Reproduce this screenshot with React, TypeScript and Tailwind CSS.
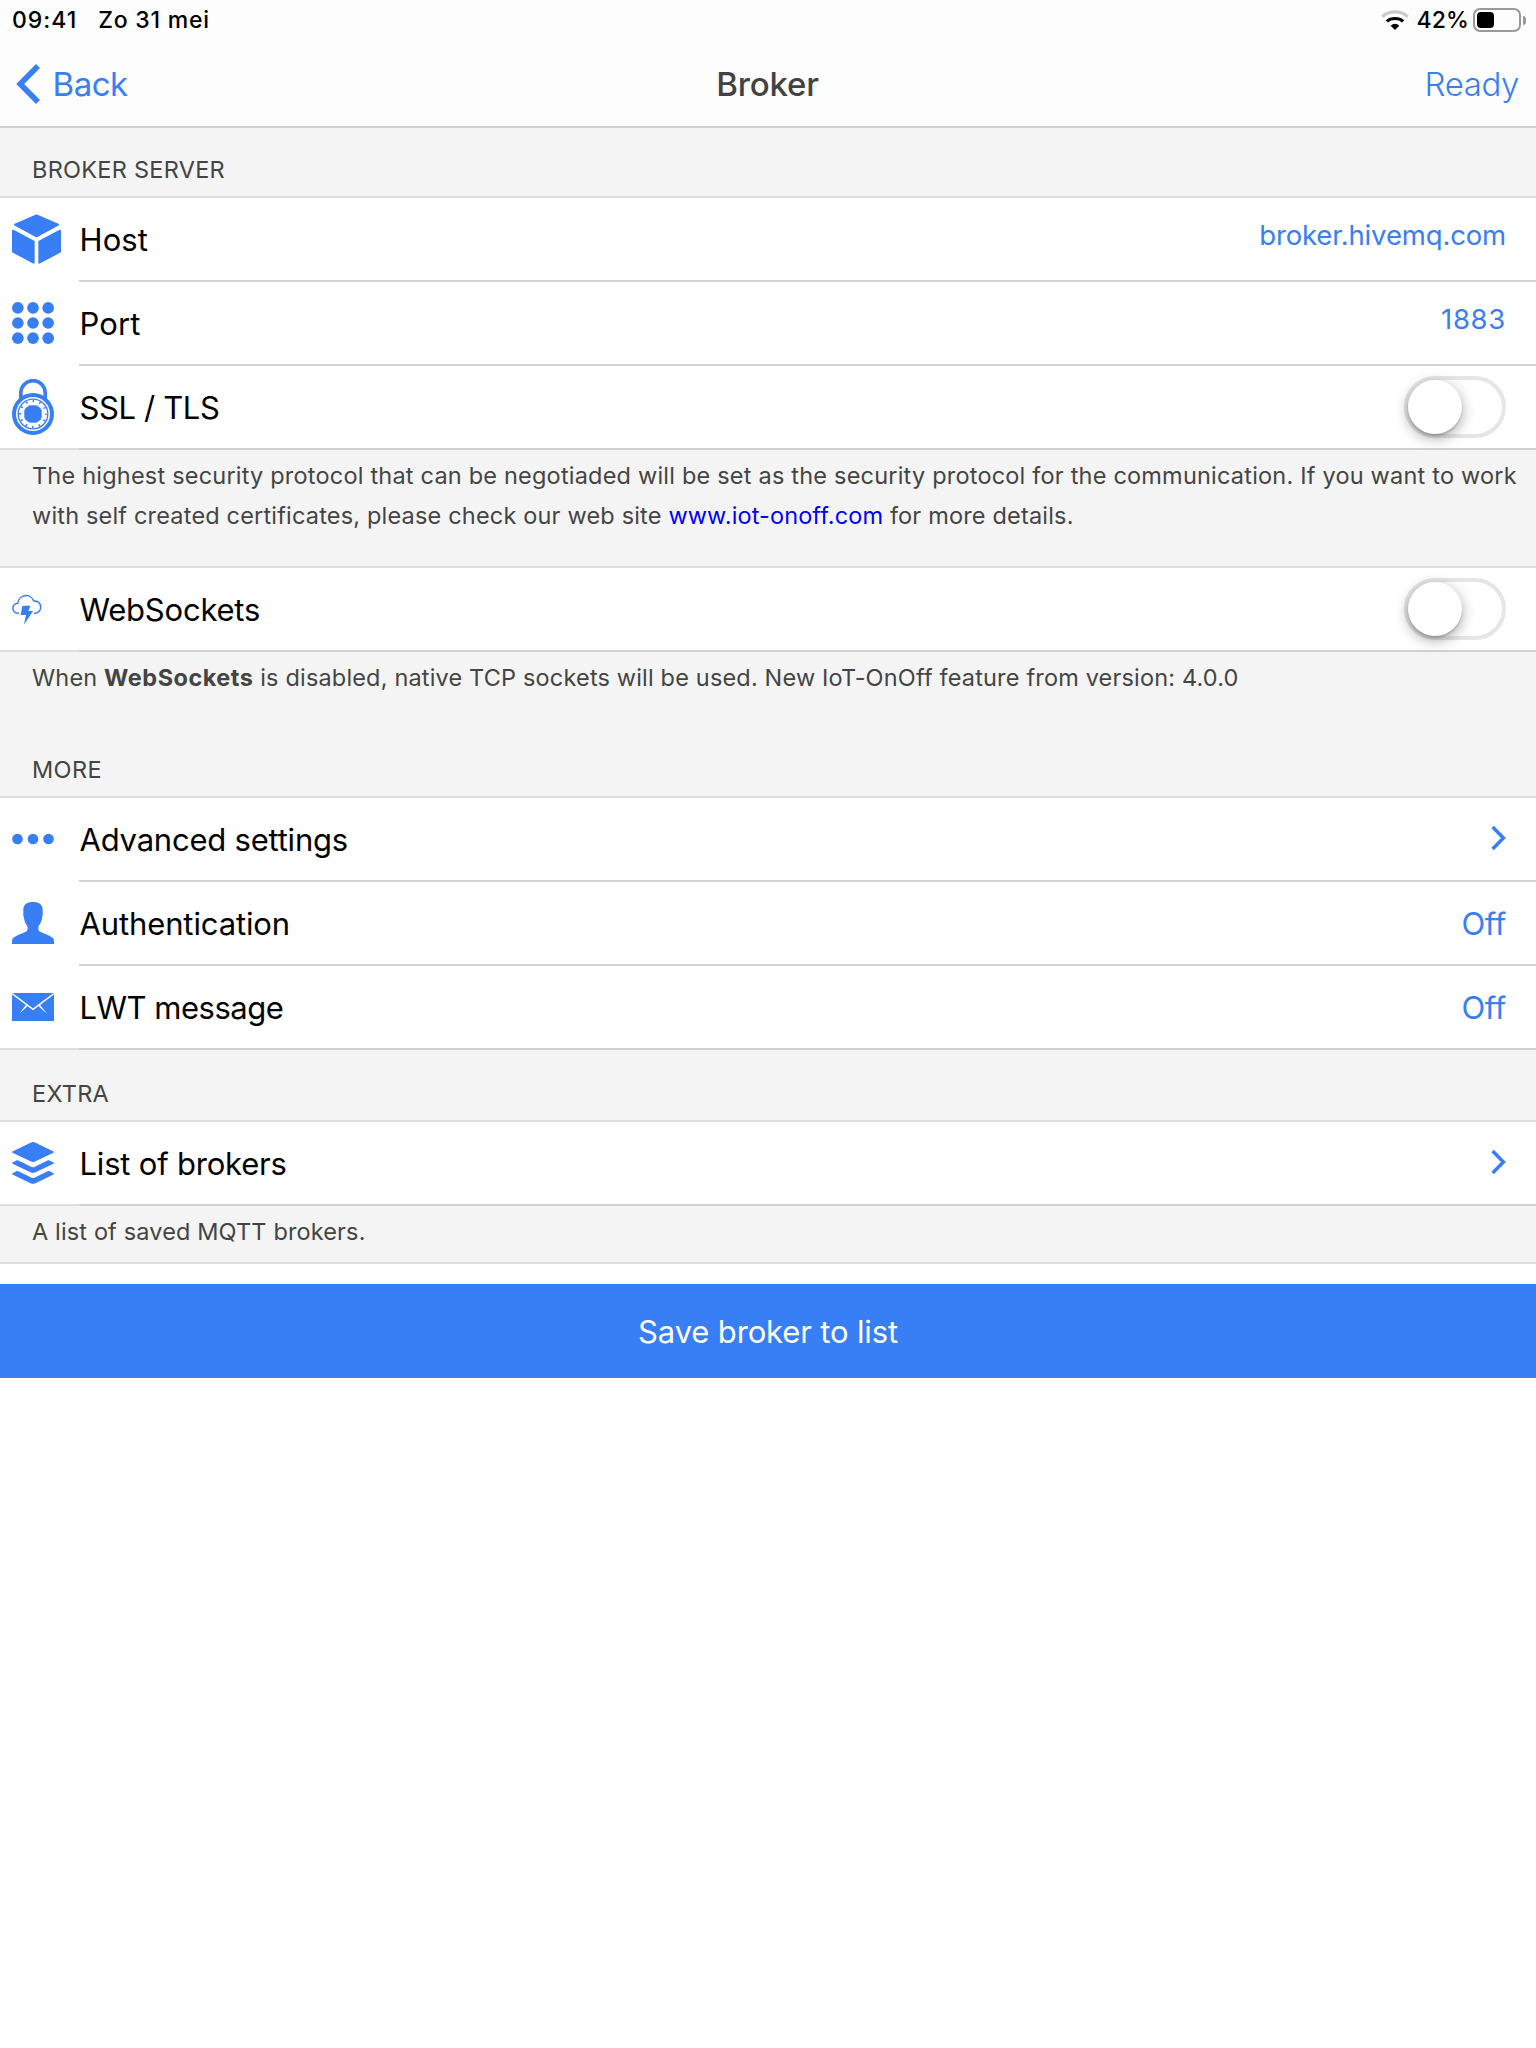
import type { ReactNode } from "react";

function CubeIcon() {
  return (
    <svg width="49" height="50" viewBox="0 0 147 150" fill="#387ef5" stroke="#387ef5" strokeWidth="6" strokeLinejoin="round">
      <path d="M73.500 4 L138 32 L73.500 67 L9 32 Z" />
      <path d="M3 50 L65 83 V146 L3 113 Z" />
      <path d="M144 50 L82 83 V146 L144 113 Z" />
    </svg>
  );
}

function KeypadIcon() {
  const at = [17.5, 63, 108.5];
  return (
    <svg width="42" height="42" viewBox="0 0 126 126" fill="#387ef5">
      {at.map((y) => at.map((x) => <circle key={`${x}-${y}`} cx={x} cy={y} r="17.5" />))}
    </svg>
  );
}

function PadlockIcon() {
  return (
    <svg width="42" height="56" viewBox="0 0 126 168" fill="none" stroke="#387ef5">
      <path d="M26.500 62 V41 A36.500 36 0 0 1 99.500 41 V62" strokeWidth="11" />
      <circle cx="63" cy="105" r="57" strokeWidth="12" fill="#fff" />
      <circle cx="63" cy="105" r="44.500" strokeWidth="4" />
      <circle cx="63" cy="105" r="39" strokeWidth="7" strokeDasharray="4.500 15.920" strokeDashoffset="2.250" />
      <path d="M52 80 H74 L85 88 L88 95 V115 L85 122 L74 130 H52 L41 122 L38 115 V95 L41 88 Z" fill="#387ef5" strokeWidth="2" strokeLinejoin="round" />
    </svg>
  );
}

function StormCloudIcon() {
  return (
    <svg width="30" height="32" viewBox="0 0 90 96" fill="none">
      <path
        d="M21 61 H17.500 A15.250 15.250 0 0 1 17.500 30.500 A24.500 24.500 0 0 1 65 24 A18.500 18.500 0 0 1 70 61 H66"
        stroke="#387ef5"
        strokeWidth="4.500"
      />
      <path d="M31 38 H55 L49 54 H63 L36 95 L42 66 H26 Z" fill="#387ef5" />
    </svg>
  );
}

function MoreIcon() {
  return (
    <svg width="42" height="12" viewBox="0 0 126 36" fill="#387ef5">
      <circle cx="16.500" cy="18" r="16" />
      <circle cx="63" cy="18" r="16" />
      <circle cx="109.500" cy="18" r="16" />
    </svg>
  );
}

function PersonIcon() {
  return (
    <svg width="42" height="42" viewBox="0 0 126 126" fill="#387ef5">
      <path d="M63 0 C80 0 92 7 92 23 L92 32 C93 36 92 40 91 44 C89 58 84 66 80 72 C79 78 78 84 82 88 C90 94 106 97 117 104 C125 108 126 112 126 118 V126 H0 V118 C0 112 1 108 9 104 C20 97 36 94 44 88 C48 84 47 78 46 72 C42 66 37 58 35 44 C34 40 33 36 34 32 L34 23 C34 7 46 0 63 0 Z" />
    </svg>
  );
}

function MailIcon() {
  return (
    <svg width="42" height="28" viewBox="0 0 126 84">
      <path d="M0 0 H126 V84 H0 Z" fill="#387ef5" />
      <path d="M0 2 L63 49 L126 2" fill="none" stroke="#fff" strokeWidth="4.500" />
      <path d="M42 35 L47 39 L22 62 Z M84 35 L79 39 L105 62 Z" fill="#fff" />
    </svg>
  );
}

function LayersIcon() {
  return (
    <svg width="42" height="42" viewBox="0 0 126 127" fill="#387ef5" stroke="#387ef5" strokeWidth="4" strokeLinejoin="round">
      <path d="M58 3 Q63 1 68 3 L124 30.500 L68 57.500 Q63 60 58 57.500 L2 30.500 Z" />
      <path d="M2 64 L14 57.500 Q16 57 18 58 L58 77.500 Q63 79.500 68 77.500 L108 58 Q110 57 112 57.500 L124 64 L68 90.500 Q63 92.500 58 90.500 Z" />
      <path d="M2 96.500 L14 90 Q16 89.500 18 90.500 L58 110 Q63 112 68 110 L108 90.500 Q110 89.500 112 90 L124 96.500 L68 123.500 Q63 125.500 58 123.500 Z" />
    </svg>
  );
}

function WifiIcon() {
  return (
    <svg width="28" height="20" viewBox="0 0 84 60" fill="none">
      <path d="M4 20.500 Q18 5.500 42 5.500 Q66 5.500 80 20.500" stroke="#cacaca" strokeWidth="9.500" />
      <path d="M17.500 34 Q27 25.500 42 25.500 Q57 25.500 66.500 34" stroke="#000" strokeWidth="9.500" />
      <path d="M29 47 Q35 41.500 42 41.500 Q49 41.500 55 47 L42 60 Z" fill="#000" />
    </svg>
  );
}

function ArrowRight() {
  return (
    <svg className="mb-0.5" width="15" height="26" viewBox="0 0 15 26" fill="none">
      <path d="M1.600 2 L12.400 13 L1.600 24" stroke="#387ef5" strokeWidth="3.500" />
    </svg>
  );
}

function Switch() {
  return (
    <div className="h-[62px] w-[102px] rounded-full border-4 border-[#e6e6e6] bg-white">
      <div className="size-[54px] rounded-full bg-white shadow-[0_4px_14px_rgba(0,0,0,0.35),0_2px_2px_rgba(0,0,0,0.15)]" />
    </div>
  );
}

interface RowProps {
  icon: ReactNode;
  label: string;
  tracking: string;
  last?: boolean;
  children: ReactNode;
}

function Row({ icon, label, tracking, last, children }: RowProps) {
  return (
    <div className="flex h-[84px] bg-white">
      <div className={`flex w-[79px] items-center border-b-2 pl-3 ${last ? "border-[#dedede]" : "border-white"}`}>{icon}</div>
      <div className="flex flex-1 items-center justify-between border-b-2 border-[#d1d1d1] pr-[30px]">
        <span className={`pt-0.5 pl-[0.5px] text-[31px] text-black ${tracking}`}>{label}</span>
        {children}
      </div>
    </div>
  );
}

function SectionTitle({ children, className }: { children: ReactNode; className: string }) {
  return (
    <div className={`flex items-end border-b-2 border-[#dedede] pb-[11px] pl-8 text-[23.5px] leading-[30px] text-[#444] ${className}`}>
      {children}
    </div>
  );
}

function Off() {
  return <span className="pt-0.5 text-[31px] tracking-[-0.3px] text-[#387ef5]">Off</span>;
}

export default function App() {
  return (
    <div className="flex h-[2048px] w-[1536px] flex-col bg-white font-['Inter',sans-serif]">
      <header className="flex h-32 flex-col border-b-2 border-[#d1d1d1] bg-[#fdfdfd]">
        <div className="flex h-10 items-center justify-between pr-2.5 pl-3 text-[23px] font-medium text-black">
          <div className="flex gap-[21px]">
            <span className="tracking-[1px]">09:41</span>
            <span className="tracking-[0.75px]">Zo 31 mei</span>
          </div>
          <div className="flex items-center">
            <WifiIcon />
            <span className="ml-2 tracking-[0.1px]">42%</span>
            <div className="ml-1 h-6 w-12 rounded-[7px] border-2 border-[#999] p-0.5">
              <div className="h-4 w-[17px] rounded-[4px] bg-black" />
            </div>
            <div className="ml-0.5 h-[9px] w-[3px] rounded-r-full bg-[#999]" />
          </div>
        </div>
        <div className="grid h-[86px] grid-cols-3 items-center pt-0.5 pr-[17px] pl-4 text-[33px] text-[#387ef5]">
          <div className="flex items-center gap-[12.5px]">
            <svg width="24" height="40" viewBox="0 0 24 40" fill="none">
              <path d="M22 2 L4.200 20 L22 38" stroke="#387ef5" strokeWidth="5.600" />
            </svg>
            <span className="pt-0.5 tracking-[-0.45px]">Back</span>
          </div>
          <h1 className="pt-0.5 text-center font-medium tracking-[-0.17px] text-[#424242]">Broker</h1>
          <span className="pt-0.5 text-right font-light tracking-[-0.39px]">Ready</span>
        </div>
      </header>

      <SectionTitle className="h-[70px] bg-[#f4f4f4] tracking-[0.26px]">BROKER SERVER</SectionTitle>
      <Row icon={<CubeIcon />} label="Host" tracking="tracking-[0.1px]">
        <span className="pb-[7px] text-[27.5px] tracking-[-0.15px] text-[#387ef5]">broker.hivemq.com</span>
      </Row>
      <Row icon={<KeypadIcon />} label="Port" tracking="tracking-[0.1px]">
        <span className="pb-[7px] text-[27.5px] tracking-[0.7px] text-[#387ef5]">1883</span>
      </Row>
      <Row icon={<PadlockIcon />} label="SSL / TLS" tracking="tracking-[-0.38px]" last>
        <Switch />
      </Row>
      <p className="h-[118px] border-b-2 border-[#dedede] bg-[#f4f4f4] pt-[6px] pl-8 text-[23.5px] leading-[40px] tracking-[0.205px] whitespace-nowrap text-[#444]">
        The highest security protocol that can be negotiaded will be set as the security protocol for the communication. If you want to work
        <br />
        <span className="tracking-[0.18px]">
          with self created certificates, please check our web site{" "}
          <a className="tracking-[0.12px] text-[#0000ff]">www.iot-onoff.com</a> for more details.
        </span>
      </p>
      <Row icon={<StormCloudIcon />} label="WebSockets" tracking="tracking-[-0.22px]" last>
        <Switch />
      </Row>
      <p className="h-[76px] bg-[#f4f4f4] pt-[6px] pl-8 text-[23.5px] leading-[40px] tracking-[0.17px] whitespace-nowrap text-[#444]">
        When <b className="font-bold tracking-[0.5px]">WebSockets</b> is disabled, native TCP sockets will be used. New IoT-OnOff feature from version: 4.0.0
      </p>

      <SectionTitle className="h-[70px] bg-[#f4f4f4] tracking-[0.39px]">MORE</SectionTitle>
      <Row icon={<MoreIcon />} label="Advanced settings" tracking="tracking-[-0.22px]">
        <ArrowRight />
      </Row>
      <Row icon={<PersonIcon />} label="Authentication" tracking="tracking-[-0.12px]">
        <Off />
      </Row>
      <Row icon={<MailIcon />} label="LWT message" tracking="tracking-[-0.5px]" last>
        <Off />
      </Row>

      <SectionTitle className="h-[72px] bg-[#f4f4f4] tracking-[0.25px]">EXTRA</SectionTitle>
      <Row icon={<LayersIcon />} label="List of brokers" tracking="tracking-[-0.2px]" last>
        <ArrowRight />
      </Row>
      <p className="h-[58px] border-b-2 border-[#dedede] bg-[#f4f4f4] pt-[6px] pl-8 text-[23.5px] leading-[40px] tracking-[0.14px] text-[#444]">
        A list of saved MQTT brokers.
      </p>

      <button className="mt-5 flex h-[94px] items-center justify-center bg-[#387ef5] pt-0.5 text-[31px] tracking-[-0.15px] text-white">
        Save broker to list
      </button>
    </div>
  );
}
